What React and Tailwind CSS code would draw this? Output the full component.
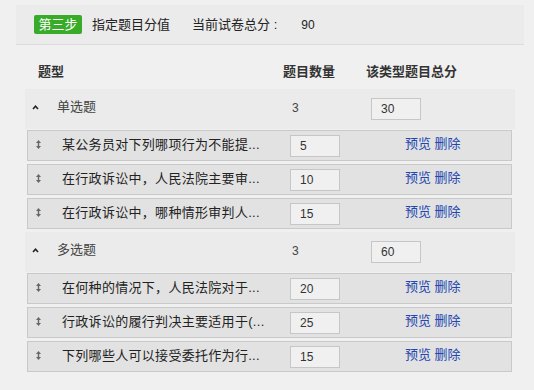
const groups = [
  {
    name: '单选题',
    count: 3,
    total: 30,
    items: [
      { title: '某公务员对下列哪项行为不能提...', score: 5 },
      { title: '在行政诉讼中，人民法院主要审...', score: 10 },
      { title: '在行政诉讼中，哪种情形审判人...', score: 15 },
    ],
  },
  {
    name: '多选题',
    count: 3,
    total: 60,
    items: [
      { title: '在何种的情况下，人民法院对于...', score: 20 },
      { title: '行政诉讼的履行判决主要适用于(...', score: 25 },
      { title: '下列哪些人可以接受委托作为行...', score: 15 },
    ],
  },
]

function Caret() {
  return (
    <svg width="7" height="5" viewBox="0 0 7 5" className="block">
      <path d="M1 4 L3.5 1.3 L6 4" fill="none" stroke="#222" strokeWidth="1.6" />
    </svg>
  )
}

function DragIcon() {
  return (
    <svg width="5" height="9" viewBox="0 0 5 9" className="block">
      <path d="M2.5 0 L5 3 L0 3 Z" fill="#666" />
      <rect x="1.8" y="2.5" width="1.4" height="4" fill="#666" />
      <path d="M2.5 9 L5 6 L0 6 Z" fill="#666" />
    </svg>
  )
}

function ScoreBox({ value }) {
  return (
    <div className="w-[50px] h-[22px] bg-[#f0f0f0] border border-[#c6c6c6] flex items-center pl-[9px] text-[12px] text-[#333]">
      {value}
    </div>
  )
}

export default function App() {
  return (
    <div className="w-[534px] h-[390px] bg-[#f0f0f0] pt-[5px] font-['Liberation_Sans','Noto_Sans_CJK_SC',sans-serif] text-[13px] text-[#222] overflow-hidden">
      {/* step header */}
      <div className="ml-4 w-[508px] h-[40px] bg-[#ebebeb] border-b border-[#dcdcdc] flex items-center pl-[18px]">
        <span className="w-[48px] h-[19px] rounded-[2px] bg-[#38ab29] text-white flex items-center justify-center">第三步</span>
        <span className="ml-[10px]">指定题目分值</span>
        <span className="ml-[22px]">当前试卷总分 :</span>
        <span className="ml-[24px] text-[12px]">90</span>
      </div>

      {/* table head */}
      <div className="ml-[25px] w-[490px] h-[44px] pt-[10px] flex items-center font-bold text-[#333]">
        <span className="pl-[13px] w-[258px]">题型</span>
        <span className="w-[83px]">题目数量</span>
        <span>该类型题目总分</span>
      </div>

      {groups.map((g) => (
        <div key={g.name}>
          <div className="ml-[25px] w-[490px] h-[40px] bg-[#ebebeb] flex items-center mb-px">
            <span className="w-[32px] pl-[7px] pb-[4px]"><Caret /></span>
            <span className="w-[235px] text-[#444] pb-[4px]">{g.name}</span>
            <span className="w-[79px] text-[12px] text-[#444] pb-[2px]">{g.count}</span>
            <ScoreBox value={g.total} />
          </div>
          {g.items.map((it) => (
            <div key={it.title} className="ml-[27px] w-[485px] h-[31px] bg-[#e2e2e2] border border-[#c9c9c9] flex items-center mb-[3px]">
              <span className="w-[34px] pl-[8px] pb-[2px]"><DragIcon /></span>
              <span className="w-[228px] tracking-[0.3px] text-[#222] whitespace-nowrap overflow-hidden pb-[1px]">{it.title}</span>
              <ScoreBox value={it.score} />
              <span className="ml-[65px] text-[#2346b0] pb-[4px]">预览 删除</span>
            </div>
          ))}
        </div>
      ))}
    </div>
  )
}
